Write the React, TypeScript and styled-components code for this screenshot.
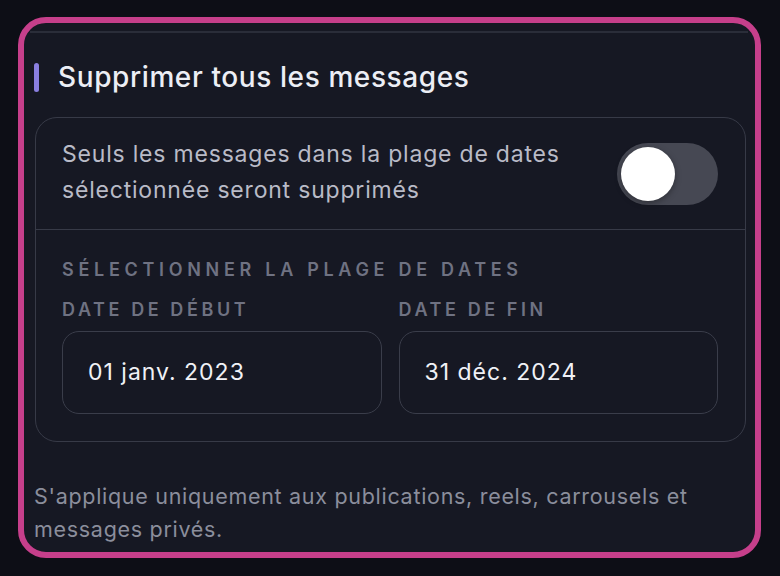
import styled, { createGlobalStyle } from 'styled-components'

const GlobalStyle = createGlobalStyle`
  html, body {
    margin: 0;
    padding: 0;
    background: #0d0e16;
  }
  body {
    font-family: Inter, 'Noto Sans', sans-serif;
    -webkit-font-smoothing: antialiased;
  }
`

const Page = styled.div`
  width: 780px;
  height: 576px;
  padding: 17px 19px 0 18px;
  box-sizing: border-box;
`

const Frame = styled.div`
  height: 541px;
  box-sizing: border-box;
  border: 6px solid #c63f8b;
  border-radius: 28px;
  background: #161823;
  padding: 0 9px 0 10px;
  display: flex;
  flex-direction: column;
`

const TopRule = styled.div`
  height: 2px;
  margin: 8px -2px 0 -4px;
  background: #2a2d39;
`

const TitleRow = styled.div`
  display: flex;
  align-items: center;
  gap: 19px;
  margin-top: 28px;
  height: 32px;
`

const AccentBar = styled.span`
  width: 5px;
  height: 29px;
  border-radius: 3px;
  background: #8a7fe0;
`

const Title = styled.h2`
  margin: 0;
  font-size: 28px;
  font-weight: 500;
  color: #eceef5;
  letter-spacing: 0.6px;
`

const Box = styled.div`
  margin: 24px 0 0 1px;
  border: 1.5px solid #373a47;
  border-radius: 22px;
`

const ToggleRow = styled.div`
  display: flex;
  align-items: center;
  justify-content: space-between;
  height: 111px;
  padding: 0 27px 0 26px;
  border-bottom: 1.5px solid #373a47;
`

const Description = styled.p`
  margin: -4px 0 0;
  font-size: 23px;
  line-height: 36px;
  letter-spacing: 0.8px;
  color: #b9bbc7;
`

const Switch = styled.button<{ $on: boolean }>`
  position: relative;
  width: 101px;
  height: 62px;
  border: none;
  border-radius: 31px;
  background: ${(p) => (p.$on ? '#8a7fe0' : '#464853')};
  padding: 0;
  flex-shrink: 0;

  &::after {
    content: '';
    position: absolute;
    top: 4px;
    left: ${(p) => (p.$on ? '43px' : '4px')};
    width: 54px;
    height: 54px;
    border-radius: 50%;
    background: #ffffff;
    box-shadow: 0 2px 6px rgba(0, 0, 0, 0.35);
  }
`

const RangeSection = styled.div`
  padding: 28px 27px 27px 26px;
`

const Label = styled.div<{ $wide?: boolean }>`
  font-size: 18px;
  font-weight: 600;
  letter-spacing: ${(p) => (p.$wide ? '4.7px' : '3.6px')};
  color: #6f7282;
  line-height: 24px;
`

const Fields = styled.div`
  display: grid;
  grid-template-columns: 1fr 1fr;
  gap: 17px;
  margin-top: 16px;
`

const Field = styled.div`
  display: flex;
  flex-direction: column;
  gap: 9px;
`

const DateInput = styled.div`
  height: 83px;
  box-sizing: border-box;
  border: 1.5px solid #3a3d4a;
  border-radius: 17px;
  display: flex;
  align-items: center;
  padding-left: 25px;
  padding-bottom: 2px;
  font-size: 23px;
  letter-spacing: 1px;
  color: #f0f1f6;
`

const Footer = styled.p`
  margin: 38px 0 0;
  font-size: 21.5px;
  line-height: 33px;
  letter-spacing: 0.7px;
  color: #8b8e9c;
`

export default function App() {
  return (
    <>
      <GlobalStyle />
      <Page>
        <Frame>
          <TopRule />
          <TitleRow>
            <AccentBar />
            <Title>Supprimer tous les messages</Title>
          </TitleRow>
          <Box>
            <ToggleRow>
              <Description>
                Seuls les messages dans la plage de dates
                <br />
                sélectionnée seront supprimés
              </Description>
              <Switch type='button' $on={false} aria-label='Plage de dates' />
            </ToggleRow>
            <RangeSection>
              <Label $wide>SÉLECTIONNER LA PLAGE DE DATES</Label>
              <Fields>
                <Field>
                  <Label>DATE DE DÉBUT</Label>
                  <DateInput>01 janv. 2023</DateInput>
                </Field>
                <Field>
                  <Label>DATE DE FIN</Label>
                  <DateInput>31 déc. 2024</DateInput>
                </Field>
              </Fields>
            </RangeSection>
          </Box>
          <Footer>
            S'applique uniquement aux publications, reels, carrousels et
            <br />
            messages privés.
          </Footer>
        </Frame>
      </Page>
    </>
  )
}
